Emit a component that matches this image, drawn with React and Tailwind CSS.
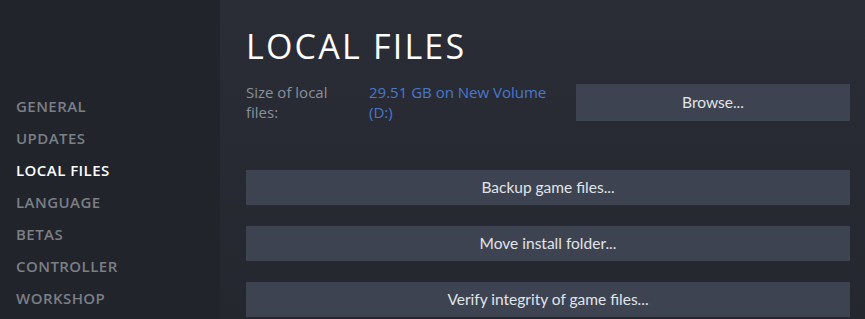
const navItems = ["GENERAL", "UPDATES", "LOCAL FILES", "LANGUAGE", "BETAS", "CONTROLLER", "WORKSHOP"];

function ActionButton({ label, className = "" }) {
    return (
        <button className={"h-[35px] w-full bg-[#3d4350] font-['Lato',sans-serif] text-[15.5px] text-[#e1e4e8] " + className}>
            {label}
        </button>
    );
}

export default function App() {
    return (
        <div className="flex h-[319px] w-[865px] overflow-hidden bg-[#23262e] font-['Open_Sans',sans-serif]">
            {/* Sidebar */}
            <aside className="flex w-[220px] shrink-0 flex-col bg-[#21242b] pt-[90px] pl-4">
                {navItems.map((item) => (
                    <div
                        key={item}
                        className={
                            "h-8 text-[15px] font-semibold leading-8 tracking-[0.03em] " +
                            (item === "LOCAL FILES" ? "text-white" : "text-[#7b7f86]")
                        }
                    >
                        {item}
                    </div>
                ))}
            </aside>

            {/* Content */}
            <main className="flex flex-1 flex-col bg-gradient-to-b from-[#2a2d36] to-[#24272e] pl-[26px] pr-[15px] pt-[26px]">
                <h1 className="h-[40px] text-[34px] font-normal leading-[40px] tracking-[0.065em] text-white">LOCAL FILES</h1>

                <div className="mt-[16px] flex items-start">
                    <div className="w-[123px] text-[15px] leading-5 text-[#8a9099]">
                        Size of local
                        <br />
                        files:
                    </div>
                    <div className="w-[190px] text-[15px] leading-5 text-[#4a78cc]">29.51 GB on New Volume (D:)</div>
                    <ActionButton label="Browse..." className="ml-auto !h-[37px] !w-[274px] mt-[2px]" />
                </div>

                <div className="mt-[48px] flex flex-col gap-[21px]">
                    <ActionButton label="Backup game files..." />
                    <ActionButton label="Move install folder..." />
                    <ActionButton label="Verify integrity of game files..." />
                </div>
            </main>
        </div>
    );
}
